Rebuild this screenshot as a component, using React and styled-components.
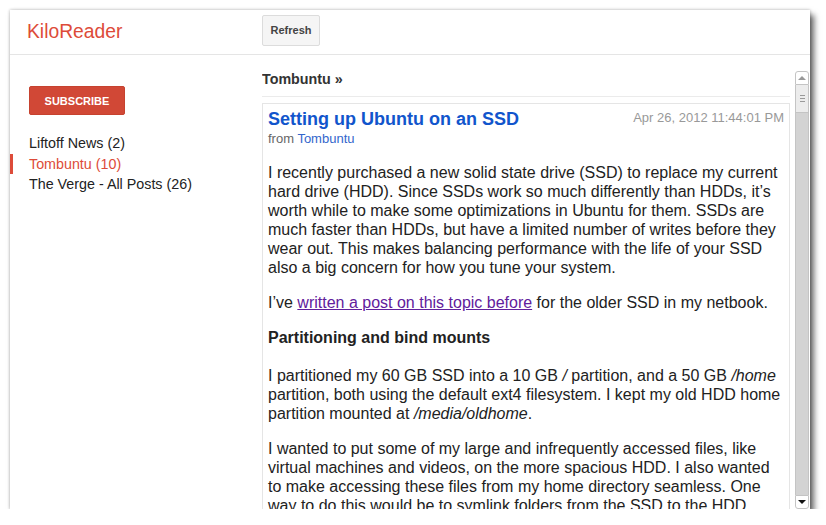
import React from "react";
import styled, { createGlobalStyle } from "styled-components";

const GlobalStyle = createGlobalStyle`
  html, body {
    margin: 0;
    padding: 0;
    background: #ffffff;
  }
  body {
    font-family: "Liberation Sans", Arial, sans-serif;
    color: #222;
  }
`;

const Window = styled.div`
  margin: 10px 0 0 10px;
  width: 800px;
  height: 499px;
  background: #ffffff;
  display: flex;
  flex-direction: column;
  overflow: hidden;
  box-shadow: 4px 5px 6px rgba(0, 0, 0, 0.6), 0 0 3px rgba(0, 0, 0, 0.3);
`;

const Header = styled.div`
  height: 44px;
  flex: 0 0 auto;
  display: flex;
  align-items: center;
  border-bottom: 1px solid #e5e5e5;
`;

const LogoCell = styled.div`
  width: 252px;
  padding-left: 17px;
  box-sizing: border-box;
`;

const Logo = styled.div`
  font-size: 19.3px;
  color: #dd4b39;
  line-height: 24px;
`;

const ToolButton = styled.button`
  height: 31px;
  width: 58px;
  padding: 0;
  margin-top: -4px;
  font-family: inherit;
  font-size: 11px;
  font-weight: bold;
  color: #444;
  background: #f5f5f5;
  border: 1px solid #dcdcdc;
  border-radius: 2px;
`;

const Body = styled.div`
  flex: 1;
  display: flex;
  min-height: 0;
`;

const Sidebar = styled.div`
  width: 252px;
  flex: 0 0 auto;
  padding-top: 31px;
`;

const SubscribeButton = styled.button`
  margin-left: 19px;
  width: 96px;
  height: 29px;
  padding: 0;
  font-family: inherit;
  font-size: 11px;
  font-weight: bold;
  color: #ffffff;
  background: #d14836;
  border: 1px solid #c6422f;
  border-radius: 2px;
  text-transform: uppercase;
`;

const FeedList = styled.div`
  margin-top: 18px;
`;

const FeedItem = styled.div`
  font-size: 14.3px;
  line-height: 20.5px;
  padding-left: ${p => (p.active ? "16px" : "19px")};
  border-left: ${p => (p.active ? "3px solid #dd4b39" : "none")};
  color: ${p => (p.active ? "#dd4b39" : "#222")};
`;

const Main = styled.div`
  flex: 1;
  display: flex;
  min-width: 0;
  padding-top: 16px;
`;

const Content = styled.div`
  flex: 1;
  min-width: 0;
  margin-right: 5px;
  overflow: hidden;
`;

const StreamTitle = styled.div`
  font-size: 14.3px;
  font-weight: bold;
  line-height: 16px;
  color: #333;
  padding-bottom: 9px;
  border-bottom: 1px solid #ebebeb;
`;

const Card = styled.div`
  margin-top: 6px;
  border: 1px solid #e5e5e5;
  border-bottom: none;
  padding: 4px 5px 0 5px;
`;

const EntryHead = styled.div`
  display: flex;
  justify-content: space-between;
  align-items: flex-start;
`;

const EntryTitle = styled.div`
  font-size: 18px;
  font-weight: bold;
  line-height: 23px;
  color: #1155cc;
`;

const EntryDate = styled.div`
  font-size: 13px;
  line-height: 15px;
  margin-top: 2px;
  color: #999;
`;

const Source = styled.div`
  font-size: 13px;
  line-height: 16px;
  color: #666;
`;

const SourceLink = styled.span`
  color: #3366cc;
`;

const Paragraph = styled.p`
  font-size: 16px;
  line-height: 19px;
  margin: 16px 0;
  color: #222;
`;

const TextLink = styled.a`
  color: #61209c;
  text-decoration: underline;
`;

const SubHeading = styled.h3`
  font-size: 16px;
  line-height: 19px;
  font-weight: bold;
  margin: 16px 0 19px;
  color: #222;
`;

const Scrollbar = styled.div`
  width: 14px;
  flex: 0 0 auto;
  margin-right: 1px;
  display: flex;
  flex-direction: column;
`;

const ScrollButton = styled.div`
  height: 14px;
  box-sizing: border-box;
  border: 1px solid #c4c4c4;
  border-radius: ${p => (p.up ? "3px 3px 0 0" : "0 0 3px 3px")};
  background: #ffffff;
  display: flex;
  align-items: center;
  justify-content: center;
`;

const Arrow = styled.div`
  width: 0;
  height: 0;
  border-left: 4px solid transparent;
  border-right: 4px solid transparent;
  border-bottom: ${p => (p.up ? "4px solid #999" : "none")};
  border-top: ${p => (p.up ? "none" : "4px solid #111")};
`;

const Thumb = styled.div`
  height: 28px;
  box-sizing: border-box;
  background: #ececec;
  border-left: 1px solid #c4c4c4;
  border-right: 1px solid #c4c4c4;
  border-bottom: 1px solid #c4c4c4;
  display: flex;
  flex-direction: column;
  align-items: center;
  justify-content: center;
  gap: 2px;
`;

const Grip = styled.div`
  width: 5px;
  height: 1px;
  background: #999;
`;

const Track = styled.div`
  flex: 1;
  background: #d3d3d3;
  border-left: 1px solid #c4c4c4;
  border-right: 1px solid #c4c4c4;
`;

const feeds = [
  { name: "Liftoff News", count: 2 },
  { name: "Tombuntu", count: 10, active: true },
  { name: "The Verge - All Posts", count: 26 }
];

export default function App() {
  return (
    <>
      <GlobalStyle />
      <Window>
        <Header>
          <LogoCell>
            <Logo>KiloReader</Logo>
          </LogoCell>
          <ToolButton>Refresh</ToolButton>
        </Header>
        <Body>
          <Sidebar>
            <SubscribeButton>Subscribe</SubscribeButton>
            <FeedList>
              {feeds.map(f => (
                <FeedItem key={f.name} active={f.active}>
                  {f.name} ({f.count})
                </FeedItem>
              ))}
            </FeedList>
          </Sidebar>
          <Main>
            <Content>
              <StreamTitle>Tombuntu »</StreamTitle>
              <Card>
                <EntryHead>
                  <EntryTitle>Setting up Ubuntu on an SSD</EntryTitle>
                  <EntryDate>Apr 26, 2012 11:44:01 PM</EntryDate>
                </EntryHead>
                <Source>
                  from <SourceLink>Tombuntu</SourceLink>
                </Source>
                <Paragraph>
                  I recently purchased a new solid state drive (SSD) to replace
                  my current hard drive (HDD). Since SSDs work so much
                  differently than HDDs, it’s worth while to make some
                  optimizations in Ubuntu for them. SSDs are much faster than
                  HDDs, but have a limited number of writes before they wear
                  out. This makes balancing performance with the life of your
                  SSD also a big concern for how you tune your system.
                </Paragraph>
                <Paragraph>
                  I’ve <TextLink>written a post on this topic before</TextLink>{" "}
                  for the older SSD in my netbook.
                </Paragraph>
                <SubHeading>Partitioning and bind mounts</SubHeading>
                <Paragraph>
                  I partitioned my 60 GB SSD into a 10 GB <em>/</em> partition,
                  and a 50 GB <em>/home</em> partition, both using the default
                  ext4 filesystem. I kept my old HDD home partition mounted at{" "}
                  <em>/media/oldhome</em>.
                </Paragraph>
                <Paragraph>
                  I wanted to put some of my large and infrequently accessed
                  files, like virtual machines and videos, on the more spacious
                  HDD. I also wanted to make accessing these files from my home
                  directory seamless. One way to do this would be to symlink
                  folders from the SSD to the HDD.
                </Paragraph>
              </Card>
            </Content>
            <Scrollbar>
              <ScrollButton up>
                <Arrow up />
              </ScrollButton>
              <Thumb>
                <Grip />
                <Grip />
                <Grip />
              </Thumb>
              <Track />
              <ScrollButton>
                <Arrow />
              </ScrollButton>
            </Scrollbar>
          </Main>
        </Body>
      </Window>
    </>
  );
}
